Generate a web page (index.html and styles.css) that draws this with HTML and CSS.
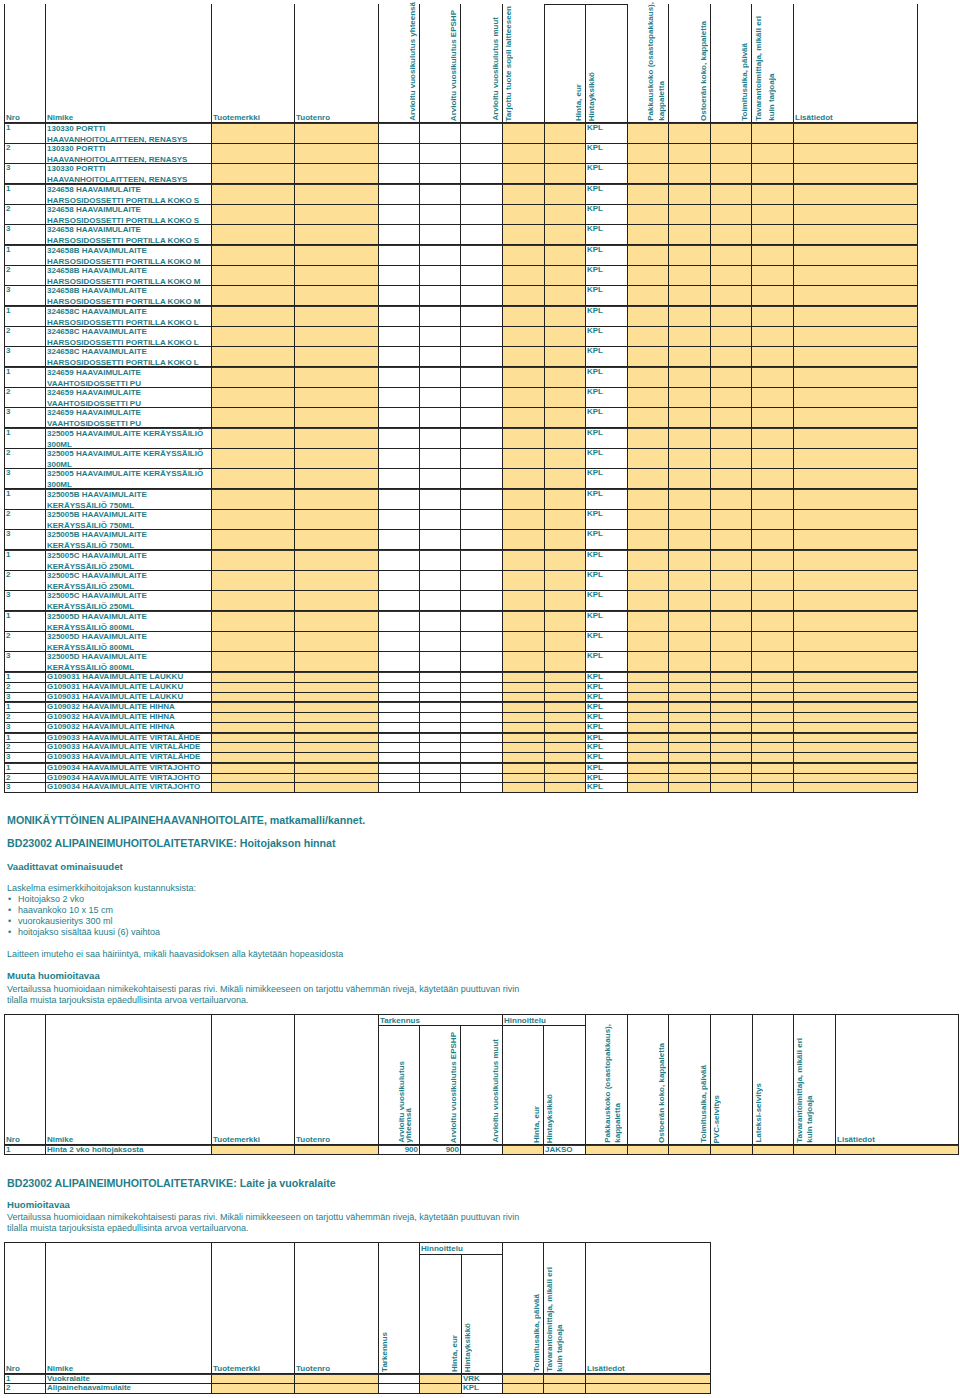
FILE: index.html
```html
<!DOCTYPE html>
<html lang="fi">
<head>
<meta charset="utf-8">
<title>Tarjouspyyntö</title>
<link rel="stylesheet" href="styles.css">
</head>
<body>
<table class="grid t1">
  <colgroup>
    <col class="c41"><col class="c166"><col class="c83"><col class="c84">
    <col class="c41"><col class="c41"><col class="c42"><col class="c42">
    <col class="c41"><col class="c42"><col class="c41"><col class="c42">
    <col class="c41"><col class="c42"><col class="c124">
  </colgroup>
  <thead>
    <tr class="hd1">
      <th class="lab">Nro</th>
      <th class="lab">Nimike</th>
      <th class="lab">Tuotemerkki</th>
      <th class="lab">Tuotenro</th>
      <th><div class="rot r"><span>Arvioitu vuosikulutus yhteensä</span></div></th>
      <th><div class="rot r"><span>Arvioitu vuosikulutus EPSHP</span></div></th>
      <th><div class="rot r"><span>Arvioitu vuosikulutus muut</span></div></th>
      <th><div class="rot l"><span>Tarjottu tuote sopii laitteeseen</span></div></th>
      <th class="boxtop"><div class="rot r short"><span>Hinta, eur</span></div></th>
      <th class="boxtop"><div class="rot l short"><span>Hintayksikkö</span></div></th>
      <th><div class="rot m"><span class="lh11">Pakkauskoko (osastopakkaus),<br>kappaletta</span></div></th>
      <th><div class="rot r"><span>Ostoerän koko, kappaletta</span></div></th>
      <th><div class="rot r"><span>Toimitusaika, päivää</span></div></th>
      <th><div class="rot l np"><span class="lh13">Tavarantoimittaja, mikäli eri<br>kuin tarjoaja</span></div></th>
      <th class="lab">Lisätiedot</th>
    </tr>
  </thead>
  <tbody>
    <tr class="d g"><td>1</td><td><div class="n2">130330 PORTTI<br>HAAVANHOITOLAITTEEN, RENASYS</div></td><td class="y"></td><td class="y"></td><td></td><td></td><td></td><td class="y"></td><td class="y"></td><td>KPL</td><td class="y"></td><td class="y"></td><td class="y"></td><td class="y"></td><td class="y"></td></tr>
    <tr class="d"><td>2</td><td><div class="n2">130330 PORTTI<br>HAAVANHOITOLAITTEEN, RENASYS</div></td><td class="y"></td><td class="y"></td><td></td><td></td><td></td><td class="y"></td><td class="y"></td><td>KPL</td><td class="y"></td><td class="y"></td><td class="y"></td><td class="y"></td><td class="y"></td></tr>
    <tr class="d"><td>3</td><td><div class="n2">130330 PORTTI<br>HAAVANHOITOLAITTEEN, RENASYS</div></td><td class="y"></td><td class="y"></td><td></td><td></td><td></td><td class="y"></td><td class="y"></td><td>KPL</td><td class="y"></td><td class="y"></td><td class="y"></td><td class="y"></td><td class="y"></td></tr>

    <tr class="d g"><td>1</td><td><div class="n2">324658 HAAVAIMULAITE<br>HARSOSIDOSSETTI PORTILLA KOKO S</div></td><td class="y"></td><td class="y"></td><td></td><td></td><td></td><td class="y"></td><td class="y"></td><td>KPL</td><td class="y"></td><td class="y"></td><td class="y"></td><td class="y"></td><td class="y"></td></tr>
    <tr class="d"><td>2</td><td><div class="n2">324658 HAAVAIMULAITE<br>HARSOSIDOSSETTI PORTILLA KOKO S</div></td><td class="y"></td><td class="y"></td><td></td><td></td><td></td><td class="y"></td><td class="y"></td><td>KPL</td><td class="y"></td><td class="y"></td><td class="y"></td><td class="y"></td><td class="y"></td></tr>
    <tr class="d"><td>3</td><td><div class="n2">324658 HAAVAIMULAITE<br>HARSOSIDOSSETTI PORTILLA KOKO S</div></td><td class="y"></td><td class="y"></td><td></td><td></td><td></td><td class="y"></td><td class="y"></td><td>KPL</td><td class="y"></td><td class="y"></td><td class="y"></td><td class="y"></td><td class="y"></td></tr>

    <tr class="d g"><td>1</td><td><div class="n2">324658B HAAVAIMULAITE<br>HARSOSIDOSSETTI PORTILLA KOKO M</div></td><td class="y"></td><td class="y"></td><td></td><td></td><td></td><td class="y"></td><td class="y"></td><td>KPL</td><td class="y"></td><td class="y"></td><td class="y"></td><td class="y"></td><td class="y"></td></tr>
    <tr class="d"><td>2</td><td><div class="n2">324658B HAAVAIMULAITE<br>HARSOSIDOSSETTI PORTILLA KOKO M</div></td><td class="y"></td><td class="y"></td><td></td><td></td><td></td><td class="y"></td><td class="y"></td><td>KPL</td><td class="y"></td><td class="y"></td><td class="y"></td><td class="y"></td><td class="y"></td></tr>
    <tr class="d"><td>3</td><td><div class="n2">324658B HAAVAIMULAITE<br>HARSOSIDOSSETTI PORTILLA KOKO M</div></td><td class="y"></td><td class="y"></td><td></td><td></td><td></td><td class="y"></td><td class="y"></td><td>KPL</td><td class="y"></td><td class="y"></td><td class="y"></td><td class="y"></td><td class="y"></td></tr>

    <tr class="d g"><td>1</td><td><div class="n2">324658C HAAVAIMULAITE<br>HARSOSIDOSSETTI PORTILLA KOKO L</div></td><td class="y"></td><td class="y"></td><td></td><td></td><td></td><td class="y"></td><td class="y"></td><td>KPL</td><td class="y"></td><td class="y"></td><td class="y"></td><td class="y"></td><td class="y"></td></tr>
    <tr class="d"><td>2</td><td><div class="n2">324658C HAAVAIMULAITE<br>HARSOSIDOSSETTI PORTILLA KOKO L</div></td><td class="y"></td><td class="y"></td><td></td><td></td><td></td><td class="y"></td><td class="y"></td><td>KPL</td><td class="y"></td><td class="y"></td><td class="y"></td><td class="y"></td><td class="y"></td></tr>
    <tr class="d"><td>3</td><td><div class="n2">324658C HAAVAIMULAITE<br>HARSOSIDOSSETTI PORTILLA KOKO L</div></td><td class="y"></td><td class="y"></td><td></td><td></td><td></td><td class="y"></td><td class="y"></td><td>KPL</td><td class="y"></td><td class="y"></td><td class="y"></td><td class="y"></td><td class="y"></td></tr>

    <tr class="d g"><td>1</td><td><div class="n2">324659 HAAVAIMULAITE<br>VAAHTOSIDOSSETTI PU</div></td><td class="y"></td><td class="y"></td><td></td><td></td><td></td><td class="y"></td><td class="y"></td><td>KPL</td><td class="y"></td><td class="y"></td><td class="y"></td><td class="y"></td><td class="y"></td></tr>
    <tr class="d"><td>2</td><td><div class="n2">324659 HAAVAIMULAITE<br>VAAHTOSIDOSSETTI PU</div></td><td class="y"></td><td class="y"></td><td></td><td></td><td></td><td class="y"></td><td class="y"></td><td>KPL</td><td class="y"></td><td class="y"></td><td class="y"></td><td class="y"></td><td class="y"></td></tr>
    <tr class="d"><td>3</td><td><div class="n2">324659 HAAVAIMULAITE<br>VAAHTOSIDOSSETTI PU</div></td><td class="y"></td><td class="y"></td><td></td><td></td><td></td><td class="y"></td><td class="y"></td><td>KPL</td><td class="y"></td><td class="y"></td><td class="y"></td><td class="y"></td><td class="y"></td></tr>

    <tr class="d g"><td>1</td><td><div class="n2">325005 HAAVAIMULAITE KERÄYSSÄILIÖ<br>300ML</div></td><td class="y"></td><td class="y"></td><td></td><td></td><td></td><td class="y"></td><td class="y"></td><td>KPL</td><td class="y"></td><td class="y"></td><td class="y"></td><td class="y"></td><td class="y"></td></tr>
    <tr class="d"><td>2</td><td><div class="n2">325005 HAAVAIMULAITE KERÄYSSÄILIÖ<br>300ML</div></td><td class="y"></td><td class="y"></td><td></td><td></td><td></td><td class="y"></td><td class="y"></td><td>KPL</td><td class="y"></td><td class="y"></td><td class="y"></td><td class="y"></td><td class="y"></td></tr>
    <tr class="d"><td>3</td><td><div class="n2">325005 HAAVAIMULAITE KERÄYSSÄILIÖ<br>300ML</div></td><td class="y"></td><td class="y"></td><td></td><td></td><td></td><td class="y"></td><td class="y"></td><td>KPL</td><td class="y"></td><td class="y"></td><td class="y"></td><td class="y"></td><td class="y"></td></tr>

    <tr class="d g"><td>1</td><td><div class="n2">325005B HAAVAIMULAITE<br>KERÄYSSÄILIÖ 750ML</div></td><td class="y"></td><td class="y"></td><td></td><td></td><td></td><td class="y"></td><td class="y"></td><td>KPL</td><td class="y"></td><td class="y"></td><td class="y"></td><td class="y"></td><td class="y"></td></tr>
    <tr class="d"><td>2</td><td><div class="n2">325005B HAAVAIMULAITE<br>KERÄYSSÄILIÖ 750ML</div></td><td class="y"></td><td class="y"></td><td></td><td></td><td></td><td class="y"></td><td class="y"></td><td>KPL</td><td class="y"></td><td class="y"></td><td class="y"></td><td class="y"></td><td class="y"></td></tr>
    <tr class="d"><td>3</td><td><div class="n2">325005B HAAVAIMULAITE<br>KERÄYSSÄILIÖ 750ML</div></td><td class="y"></td><td class="y"></td><td></td><td></td><td></td><td class="y"></td><td class="y"></td><td>KPL</td><td class="y"></td><td class="y"></td><td class="y"></td><td class="y"></td><td class="y"></td></tr>

    <tr class="d g"><td>1</td><td><div class="n2">325005C HAAVAIMULAITE<br>KERÄYSSÄILIÖ 250ML</div></td><td class="y"></td><td class="y"></td><td></td><td></td><td></td><td class="y"></td><td class="y"></td><td>KPL</td><td class="y"></td><td class="y"></td><td class="y"></td><td class="y"></td><td class="y"></td></tr>
    <tr class="d"><td>2</td><td><div class="n2">325005C HAAVAIMULAITE<br>KERÄYSSÄILIÖ 250ML</div></td><td class="y"></td><td class="y"></td><td></td><td></td><td></td><td class="y"></td><td class="y"></td><td>KPL</td><td class="y"></td><td class="y"></td><td class="y"></td><td class="y"></td><td class="y"></td></tr>
    <tr class="d"><td>3</td><td><div class="n2">325005C HAAVAIMULAITE<br>KERÄYSSÄILIÖ 250ML</div></td><td class="y"></td><td class="y"></td><td></td><td></td><td></td><td class="y"></td><td class="y"></td><td>KPL</td><td class="y"></td><td class="y"></td><td class="y"></td><td class="y"></td><td class="y"></td></tr>

    <tr class="d g"><td>1</td><td><div class="n2">325005D HAAVAIMULAITE<br>KERÄYSSÄILIÖ 800ML</div></td><td class="y"></td><td class="y"></td><td></td><td></td><td></td><td class="y"></td><td class="y"></td><td>KPL</td><td class="y"></td><td class="y"></td><td class="y"></td><td class="y"></td><td class="y"></td></tr>
    <tr class="d"><td>2</td><td><div class="n2">325005D HAAVAIMULAITE<br>KERÄYSSÄILIÖ 800ML</div></td><td class="y"></td><td class="y"></td><td></td><td></td><td></td><td class="y"></td><td class="y"></td><td>KPL</td><td class="y"></td><td class="y"></td><td class="y"></td><td class="y"></td><td class="y"></td></tr>
    <tr class="d"><td>3</td><td><div class="n2">325005D HAAVAIMULAITE<br>KERÄYSSÄILIÖ 800ML</div></td><td class="y"></td><td class="y"></td><td></td><td></td><td></td><td class="y"></td><td class="y"></td><td>KPL</td><td class="y"></td><td class="y"></td><td class="y"></td><td class="y"></td><td class="y"></td></tr>

    <tr class="s g"><td>1</td><td>G109031 HAAVAIMULAITE LAUKKU</td><td class="y"></td><td class="y"></td><td></td><td></td><td></td><td class="y"></td><td class="y"></td><td>KPL</td><td class="y"></td><td class="y"></td><td class="y"></td><td class="y"></td><td class="y"></td></tr>
    <tr class="s"><td>2</td><td>G109031 HAAVAIMULAITE LAUKKU</td><td class="y"></td><td class="y"></td><td></td><td></td><td></td><td class="y"></td><td class="y"></td><td>KPL</td><td class="y"></td><td class="y"></td><td class="y"></td><td class="y"></td><td class="y"></td></tr>
    <tr class="s"><td>3</td><td>G109031 HAAVAIMULAITE LAUKKU</td><td class="y"></td><td class="y"></td><td></td><td></td><td></td><td class="y"></td><td class="y"></td><td>KPL</td><td class="y"></td><td class="y"></td><td class="y"></td><td class="y"></td><td class="y"></td></tr>

    <tr class="s g"><td>1</td><td>G109032 HAAVAIMULAITE HIHNA</td><td class="y"></td><td class="y"></td><td></td><td></td><td></td><td class="y"></td><td class="y"></td><td>KPL</td><td class="y"></td><td class="y"></td><td class="y"></td><td class="y"></td><td class="y"></td></tr>
    <tr class="s"><td>2</td><td>G109032 HAAVAIMULAITE HIHNA</td><td class="y"></td><td class="y"></td><td></td><td></td><td></td><td class="y"></td><td class="y"></td><td>KPL</td><td class="y"></td><td class="y"></td><td class="y"></td><td class="y"></td><td class="y"></td></tr>
    <tr class="s"><td>3</td><td>G109032 HAAVAIMULAITE HIHNA</td><td class="y"></td><td class="y"></td><td></td><td></td><td></td><td class="y"></td><td class="y"></td><td>KPL</td><td class="y"></td><td class="y"></td><td class="y"></td><td class="y"></td><td class="y"></td></tr>

    <tr class="s g"><td>1</td><td>G109033 HAAVAIMULAITE VIRTALÄHDE</td><td class="y"></td><td class="y"></td><td></td><td></td><td></td><td class="y"></td><td class="y"></td><td>KPL</td><td class="y"></td><td class="y"></td><td class="y"></td><td class="y"></td><td class="y"></td></tr>
    <tr class="s"><td>2</td><td>G109033 HAAVAIMULAITE VIRTALÄHDE</td><td class="y"></td><td class="y"></td><td></td><td></td><td></td><td class="y"></td><td class="y"></td><td>KPL</td><td class="y"></td><td class="y"></td><td class="y"></td><td class="y"></td><td class="y"></td></tr>
    <tr class="s"><td>3</td><td>G109033 HAAVAIMULAITE VIRTALÄHDE</td><td class="y"></td><td class="y"></td><td></td><td></td><td></td><td class="y"></td><td class="y"></td><td>KPL</td><td class="y"></td><td class="y"></td><td class="y"></td><td class="y"></td><td class="y"></td></tr>

    <tr class="s g"><td>1</td><td>G109034 HAAVAIMULAITE VIRTAJOHTO</td><td class="y"></td><td class="y"></td><td></td><td></td><td></td><td class="y"></td><td class="y"></td><td>KPL</td><td class="y"></td><td class="y"></td><td class="y"></td><td class="y"></td><td class="y"></td></tr>
    <tr class="s"><td>2</td><td>G109034 HAAVAIMULAITE VIRTAJOHTO</td><td class="y"></td><td class="y"></td><td></td><td></td><td></td><td class="y"></td><td class="y"></td><td>KPL</td><td class="y"></td><td class="y"></td><td class="y"></td><td class="y"></td><td class="y"></td></tr>
    <tr class="s"><td>3</td><td>G109034 HAAVAIMULAITE VIRTAJOHTO</td><td class="y"></td><td class="y"></td><td></td><td></td><td></td><td class="y"></td><td class="y"></td><td>KPL</td><td class="y"></td><td class="y"></td><td class="y"></td><td class="y"></td><td class="y"></td></tr>
  </tbody>
</table>

<section class="info first">
  <h2 class="title">MONIKÄYTTÖINEN ALIPAINEHAAVANHOITOLAITE, matkamalli/kannet.</h2>
  <h2 class="title gap">BD23002 ALIPAINEIMUHOITOLAITETARVIKE: Hoitojakson hinnat</h2>
  <h3 class="sub s1">Vaadittavat ominaisuudet</h3>
  <p class="txt p1">Laskelma esimerkkihoitojakson kustannuksista:</p>
  <ul class="bul">
    <li>Hoitojakso 2 vko</li>
    <li>haavankoko 10 x 15 cm</li>
    <li>vuorokausieritys 300 ml</li>
    <li>hoitojakso sisältää kuusi (6) vaihtoa</li>
  </ul>
  <p class="txt p2">Laitteen imuteho ei saa häiriintyä, mikäli haavasidoksen alla käytetään hopeasidosta</p>
  <h3 class="sub s2">Muuta huomioitavaa</h3>
  <p class="txt p3">Vertailussa huomioidaan nimikekohtaisesti paras rivi. Mikäli nimikkeeseen on tarjottu vähemmän rivejä, käytetään puuttuvan rivin<br>tilalla muista tarjouksista epäedullisinta arvoa vertailuarvona.</p>
</section>

<table class="grid t2 boxed">
  <colgroup>
    <col class="c41"><col class="c166"><col class="c83"><col class="c84">
    <col class="c41"><col class="c41"><col class="c42"><col class="c41">
    <col class="c42"><col class="c42"><col class="c41"><col class="c42">
    <col class="c42"><col class="c41"><col class="c42"><col class="c123">
  </colgroup>
  <thead>
    <tr class="ga">
      <th class="lab" rowspan="2">Nro</th>
      <th class="lab" rowspan="2">Nimike</th>
      <th class="lab" rowspan="2">Tuotemerkki</th>
      <th class="lab" rowspan="2">Tuotenro</th>
      <th class="grp" colspan="3">Tarkennus</th>
      <th class="grp" colspan="2">Hinnoittelu</th>
      <th rowspan="2"><div class="rot m2 tall"><span>Pakkauskoko (osastopakkaus),<br>kappaletta</span></div></th>
      <th rowspan="2"><div class="rot r tall"><span>Ostoerän koko, kappaletta</span></div></th>
      <th rowspan="2"><div class="rot r tall"><span>Toimitusaika, päivää</span></div></th>
      <th rowspan="2"><div class="rot l tall"><span>PVC-selvitys</span></div></th>
      <th rowspan="2"><div class="rot l tall"><span>Lateksi-selvitys</span></div></th>
      <th rowspan="2"><div class="rot l tall"><span>Tavarantoimittaja, mikäli eri<br>kuin tarjoaja</span></div></th>
      <th class="lab" rowspan="2">Lisätiedot</th>
    </tr>
    <tr class="gb">
      <th><div class="rot r inset"><span class="tight">Arvioitu vuosikulutus<br>yhteensä</span></div></th>
      <th><div class="rot r"><span>Arvioitu vuosikulutus EPSHP</span></div></th>
      <th><div class="rot r"><span>Arvioitu vuosikulutus muut</span></div></th>
      <th><div class="rot r"><span>Hinta, eur</span></div></th>
      <th><div class="rot l"><span>Hintayksikkö</span></div></th>
    </tr>
  </thead>
  <tbody>
    <tr class="s g"><td>1</td><td>Hinta 2 vko hoitojaksosta</td><td class="y"></td><td class="y"></td><td class="num">900</td><td class="num">900</td><td></td><td class="y"></td><td>JAKSO</td><td class="y"></td><td class="y"></td><td class="y"></td><td class="y"></td><td class="y"></td><td class="y"></td><td class="y"></td></tr>
  </tbody>
</table>

<section class="info second">
  <h2 class="title">BD23002 ALIPAINEIMUHOITOLAITETARVIKE: Laite ja vuokralaite</h2>
  <h3 class="sub s3">Huomioitavaa</h3>
  <p class="txt p4">Vertailussa huomioidaan nimikekohtaisesti paras rivi. Mikäli nimikkeeseen on tarjottu vähemmän rivejä, käytetään puuttuvan rivin<br>tilalla muista tarjouksista epäedullisinta arvoa vertailuarvona.</p>
</section>

<table class="grid t3 boxed">
  <colgroup>
    <col class="c41"><col class="c166"><col class="c83"><col class="c84">
    <col class="c41"><col class="c42"><col class="c41"><col class="c41">
    <col class="c42"><col class="c125">
  </colgroup>
  <thead>
    <tr class="ga3">
      <th class="lab" rowspan="2">Nro</th>
      <th class="lab" rowspan="2">Nimike</th>
      <th class="lab" rowspan="2">Tuotemerkki</th>
      <th class="lab" rowspan="2">Tuotenro</th>
      <th rowspan="2"><div class="rot l tall3"><span>Tarkennus</span></div></th>
      <th class="grp" colspan="2">Hinnoittelu</th>
      <th rowspan="2"><div class="rot r tall3"><span>Toimitusaika, päivää</span></div></th>
      <th rowspan="2"><div class="rot l tall3"><span>Tavarantoimittaja, mikäli eri<br>kuin tarjoaja</span></div></th>
      <th class="lab" rowspan="2">Lisätiedot</th>
    </tr>
    <tr class="gb">
      <th><div class="rot r"><span>Hinta, eur</span></div></th>
      <th><div class="rot l"><span>Hintayksikkö</span></div></th>
    </tr>
  </thead>
  <tbody>
    <tr class="s g"><td>1</td><td>Vuokralaite</td><td class="y"></td><td class="y"></td><td></td><td class="y"></td><td>VRK</td><td class="y"></td><td class="y"></td><td class="y"></td></tr>
    <tr class="s"><td>2</td><td>Alipainehaavaimulaite</td><td class="y"></td><td class="y"></td><td></td><td class="y"></td><td>KPL</td><td class="y"></td><td class="y"></td><td class="y"></td></tr>
  </tbody>
</table>
</body>
</html>
```

FILE: styles.css
```css
* { box-sizing: border-box; }

body {
  margin: 0;
  padding: 4px 0 0 4px;
  background: #ffffff;
  color: #1f7e8a;
  font-family: "Liberation Sans", Arial, Helvetica, sans-serif;
}

/* ---------- tables ---------- */
.grid {
  border-collapse: separate;
  border-spacing: 0;
  table-layout: fixed;
  border-left: 1px solid #222;
}
.grid.boxed { border-top: 1px solid #222; }
.t1 { width: 914px; }
.t2 { width: 955px; }
.t3 { width: 707px; }

.c41 { width: 41px; }
.c42 { width: 42px; }
.c83 { width: 83px; }
.c84 { width: 84px; }
.c166 { width: 166px; }
.c123 { width: 123px; }
.c124 { width: 124px; }
.c125 { width: 125px; }

.grid th,
.grid td {
  padding: 0 0 0 1px;
  border-right: 1px solid #222;
  border-bottom: 1px solid #222;
  font-size: 8px;
  font-weight: bold;
  text-align: left;
  white-space: nowrap;
  line-height: 8px;
}
.grid td { vertical-align: top; }
.grid th { vertical-align: bottom; padding: 0; }
.grid th.lab { padding-left: 1px; }
.grid th.grp { vertical-align: top; padding: 1px 0 0 1px; line-height: 9px; }

.boxtop { border-top: 1px solid #222; }

/* header row heights */
.hd1 { height: 119px; }
.ga { height: 11px; }
.ga3 { height: 12px; }
.gb { height: 119px; }

/* rotated header text */
.rot {
  height: 118px;
  display: flex;
  align-items: flex-end;
  padding: 0 1px;
}
.rot.short { height: 117px; }
.rot.tall { height: 129px; }
.rot.tall3 { height: 130px; }
.rot.r { justify-content: flex-end; }
.rot.l { justify-content: flex-start; }
.rot.np { padding-left: 0; }
.rot.m { justify-content: flex-end; padding-right: 1px; }
.rot.m2 { justify-content: flex-end; padding-right: 4px; }
.rot.inset { padding-right: 7px; }
.rot span {
  writing-mode: vertical-rl;
  transform: rotate(180deg);
  white-space: nowrap;
  line-height: 10px;
  padding-top: 1px;
}
.rot span.tight { line-height: 7px; }
.rot span.lh11 { line-height: 11px; }
.rot span.lh13 { line-height: 13px; }

/* body rows */
.grid tr.g > td { border-top: 1px solid #333; }
tr.d { height: 20px; }
tr.d.g { height: 21px; }
.t1 tr.s { height: 9.75px; }
.t1 tr.s.g { height: 10.75px; }
.t2 tr.s, .t3 tr.s { height: 10px; }
.t2 tr.s.g, .t3 tr.s.g { height: 10px; }

.n2 {
  line-height: 11px;
  margin-top: -1.5px;
  height: 20px;
}

.y { background: #fddf96; }
.grid td.num { text-align: right; padding: 0 1px 0 0; }

/* ---------- text blocks ---------- */
.info { padding-left: 3px; }
.info.first { margin-top: 21px; margin-bottom: 8px; }
.info.second { margin-top: 22px; margin-bottom: 8px; }

.title {
  margin: 0;
  font-size: 10.67px;
  font-weight: bold;
  line-height: 13px;
}
.title.gap { margin-top: 10px; }

.sub {
  margin: 0;
  font-size: 9.6px;
  font-weight: bold;
  line-height: 12px;
}
.sub.s1 { margin-top: 11px; }
.sub.s2 { margin-top: 10px; }
.sub.s3 { margin-top: 9px; }

.txt {
  margin: 0;
  font-size: 9px;
  line-height: 11px;
}
.txt.p1 { margin-top: 10px; }
.txt.p2 { margin-top: 11px; }
.txt.p3 { margin-top: 2px; }
.txt.p4 { margin-top: 1px; }

.bul {
  margin: 0;
  padding: 0;
  list-style: none;
  font-size: 9px;
  line-height: 11px;
}
.bul li::before {
  content: "•";
  display: inline-block;
  width: 10px;
  padding-left: 1px;
}
```
